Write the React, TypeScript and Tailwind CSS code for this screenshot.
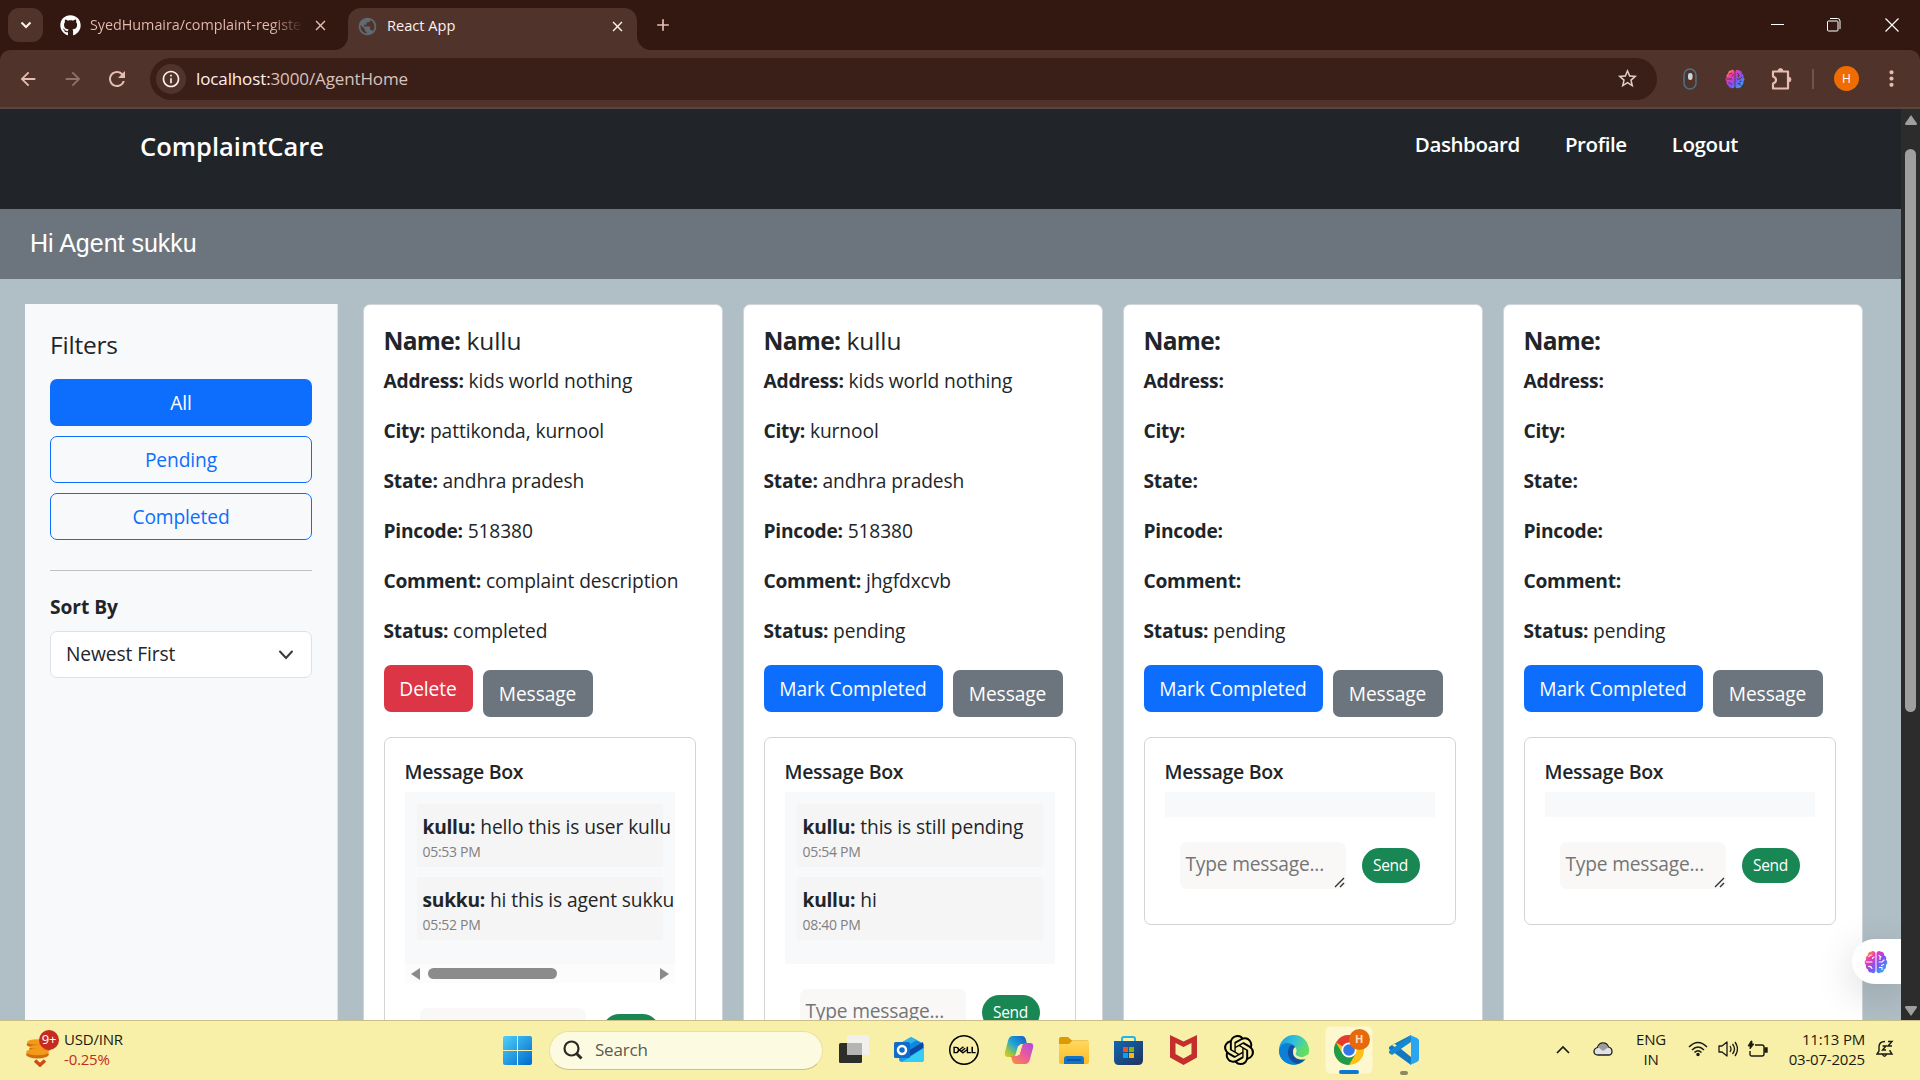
import React from "react";
import { FaGithub } from "react-icons/fa";
import { SiDell, SiOpenai } from "react-icons/si";
import { MdArrowBack, MdArrowForward, MdRefresh, MdInfoOutline, MdStarOutline, MdClose, MdAdd, MdMoreVert, MdPublic } from "react-icons/md";

type Msg = { from: string; text: string; time: string };
type Complaint = {
  name: string; address: string; city: string; state: string; pincode: string;
  comment: string; status: string; messages: Msg[]; scroll?: boolean;
};

const empty: Complaint = { name: "", address: "", city: "", state: "", pincode: "", comment: "", status: "pending", messages: [] };

const complaints: Complaint[] = [
  {
    name: "kullu", address: "kids world nothing", city: "pattikonda, kurnool", state: "andhra pradesh", pincode: "518380",
    comment: "complaint description", status: "completed", scroll: true,
    messages: [
      { from: "kullu", text: "hello this is user kullu", time: "05:53 PM" },
      { from: "sukku", text: "hi this is agent sukku", time: "05:52 PM" },
    ],
  },
  {
    name: "kullu", address: "kids world nothing", city: "kurnool", state: "andhra pradesh", pincode: "518380",
    comment: "jhgfdxcvb", status: "pending",
    messages: [
      { from: "kullu", text: "this is still pending", time: "05:54 PM" },
      { from: "kullu", text: "hi", time: "08:40 PM" },
    ],
  },
  empty,
  empty,
];

function BrainIcon({ className, line }: { className: string; line: string }) {
  return (
    <svg className={className} viewBox="0 0 24 24">
      <path d="M11.500 3.500C11.500 1 8.500.3 7 1.800 4.800 1.800 3.500 3.600 3.800 5.400 1.800 6.300 1.300 8.400 2 9.800.2 11 .2 13.700 2 15 1.500 17.200 2.500 19 4 19.600 4 22 6 23 7.600 22.400 9 24 11.500 23 11.500 20.800Z" fill="url(#brain)" />
      <path d="M12.500 3.500C12.500 1 15.500.3 17 1.800 19.200 1.800 20.500 3.600 20.200 5.400 22.200 6.300 22.700 8.400 22 9.800 23.800 11 23.800 13.700 22 15 22.500 17.200 21.500 19 20 19.600 20 22 18 23 16.400 22.400 15 24 12.500 23 12.500 20.800Z" fill="url(#brain)" />
      <path d="M5 6.500Q6 4.800 8 5M2 12h6M8.500 8.500Q8.500 7.500 10 7M4.500 16.500Q7 16 8 18.500M15 5.500l2 1.500M16 7.500v2M15 12h3l2-2M15.500 17.500h2.500v2M19.500 14.500l-2 1" fill="none" stroke={line} strokeWidth="1.100" strokeLinecap="round" />
    </svg>
  );
}

function TabStrip() {
  return (
    <div className="flex h-[50px] shrink-0 bg-[#331812] pl-2 text-[14.4px] tracking-[-0.1px] text-[#e7bdb1]">
      <div className="mt-2 flex h-[34px] w-[35px] items-center justify-center rounded-[11px] bg-[#50342c] text-[#fff0ec]">
        <svg width="12" height="8" viewBox="0 0 12 8" fill="none" stroke="currentColor" strokeWidth="2"><path d="M1.500 1.500 6 6l4.500-4.500" /></svg>
      </div>
      <div className="flex w-[305px] items-center pl-[17px]">
        <FaGithub className="size-[21px] text-white" />
        <span className="ml-[9px] w-[213px] bg-gradient-to-r from-[#e7bdb1] from-85% to-transparent bg-clip-text tracking-[-0.05px] whitespace-nowrap text-transparent">SyedHumaira/complaint-registe</span>
        <MdClose className="ml-[9px] size-[17px]" />
      </div>
      <div className="relative mt-2 flex h-[42px] w-[289px] items-center rounded-t-[13px] bg-[#50342c] pb-1.5 pl-[9px] text-[#fff0ec]">
        <svg className="absolute bottom-0 -left-3.5" width="14" height="14"><path d="M14 0V14H0A14 14 0 0 0 14 0Z" fill="#50342c" /></svg>
        <svg className="absolute -right-3.5 bottom-0" width="14" height="14"><path d="M0 0V14H14A14 14 0 0 1 0 0Z" fill="#50342c" /></svg>
        <MdPublic className="size-[21px] text-[#5f6b72]" />
        <span className="ml-[9px] text-[14.600px] tracking-normal">React App</span>
        <MdClose className="mr-[11px] ml-auto size-[17px]" />
      </div>
      <MdAdd className="mt-[15px] ml-[16px] size-[20px]" />
      <div className="ml-auto flex h-[50px] items-center text-white">
        <svg className="mr-[43px]" width="13" height="14"><path d="M0 6.500H13" stroke="white" /></svg>
        <svg className="mr-[44px]" width="14" height="14" fill="none" stroke="white"><rect x=".5" y="3" width="10.500" height="10" rx="1" /><path d="M3 .5h7.500a2.500 2.500 0 0 1 2.500 2.500V11" /></svg>
        <svg className="mr-[21px]" width="14" height="14" stroke="white" strokeWidth="1.200"><path d="M.5.5l13 13M13.500.5l-13 13" /></svg>
      </div>
    </div>
  );
}

function Toolbar() {
  return (
    <div className="bg-[#331812]">
      <div className="flex h-[59px] items-center rounded-t-[10px] border-b-2 border-[#5b4540] bg-[#50342c] pl-[17px] text-[#e7bdb1]">
        <MdArrowBack className="size-[22px]" />
        <MdArrowForward className="ml-[23px] size-[22px] text-[#917168]" />
        <MdRefresh className="ml-[21px] size-[24px]" />
        <div className="ml-[21px] flex h-[42px] w-[1507px] items-center rounded-full bg-[#3a1f19] pl-[6px]">
          <div className="flex size-[30px] items-center justify-center rounded-full bg-[#50342c] text-[#fff0ec]"><MdInfoOutline className="size-5" /></div>
          <span className="mt-px ml-[10px] text-[17px] tracking-[-0.12px] text-[#d9c2bb]"><span className="text-[#fff0ec]">localhost:</span>3000/AgentHome</span>
          <MdStarOutline className="mr-[18px] ml-auto size-[23px] text-[#dfcdc6]" />
        </div>
        <svg className="ml-[26px]" width="14" height="22" fill="none"><rect x="1" y="1" width="12" height="20" rx="6" stroke="#4f7082" strokeWidth="1.500" /><rect x="5" y="5" width="4.500" height="7" rx="2.200" fill="#c6d6df" /></svg>
        <BrainIcon className="ml-[28px] size-[20px]" line="#50342c" />
        <svg className="ml-[25px]" width="23" height="24" viewBox="0 0 23 24" fill="none" stroke="currentColor" strokeWidth="2.200" strokeLinejoin="round"><path d="M3 4.500h15v17H3v-5q3-1 3-3.500t-3-3.500Z" /><path d="M8 4a2.500 2.500 0 0 1 5 0ZM18.500 10a2.500 2.500 0 0 1 0 5Z" fill="currentColor" strokeWidth=".8" /></svg>
        <div className="ml-[19px] h-5 w-[2px] bg-[#72534b]" />
        <div className="ml-[20px] flex size-[25px] items-center justify-center rounded-full bg-[#ef6c00] text-[12px] text-white">H</div>
        <MdMoreVert className="ml-[20px] size-[25px]" />
      </div>
    </div>
  );
}

function Sidebar() {
  return (
    <aside className="h-[760px] w-[313px] shrink-0 border-r border-[#dee2e6] bg-[#f8f9fa] px-[25px] pt-[26px]">
      <h4 className="text-[24.500px] leading-[30px] font-medium tracking-[-0.2px]">Filters</h4>
      <div className="mt-[19px] flex flex-col gap-[10px]">
        <button className="h-[47px] rounded-[7px] bg-[#0d6efd] pt-px text-white">All</button>
        <button className="h-[47px] rounded-[7px] border border-[#0d6efd] pt-px text-[#0d6efd]">Pending</button>
        <button className="h-[47px] rounded-[7px] border border-[#0d6efd] pt-px text-[#0d6efd]">Completed</button>
      </div>
      <div className="mt-[30px] h-px bg-[#c0c2c4]" />
      <div className="mt-[21px] leading-[30px] font-bold tracking-[-0.05px]">Sort By</div>
      <div className="mt-[9px] flex h-[47px] items-center justify-between rounded-[7px] border border-[#dee2e6] bg-white pr-[17px] pl-[15px]">
        Newest First
        <svg width="16" height="12" viewBox="0 0 16 12" fill="none" stroke="#343a40" strokeWidth="2" strokeLinecap="round"><path d="M2 2.500 8 9l6-6.500" /></svg>
      </div>
    </aside>
  );
}

function Field({ label, value }: { label: string; value: string }) {
  return (
    <p className="mb-5 h-[30px] leading-[30px] whitespace-nowrap"><b className="tracking-[-0.25px]">{label}:</b> {value}</p>
  );
}

function MessageBox({ c }: { c: Complaint }) {
  return (
    <div className="mt-5 flex w-[312px] flex-col rounded-[7px] border border-[#d3d3d4] px-5 pt-[21px] pb-[35px]">
      <h6 className="mb-[8px] h-[25px] text-[19.500px] leading-[25px] font-semibold tracking-[-0.3px]">Message Box</h6>
      <div className="w-[270px] overflow-hidden bg-[#f8f9fa]">
        <div className={c.messages.length ? "px-3 pt-3 pb-[24px]" : "h-[25px]"}>
          <div className="flex flex-col gap-[10px]">
            {c.messages.map((m) => (
              <div key={m.time} className="h-[63px] bg-[#f5f5f5] px-[6px] pt-[8px] whitespace-nowrap">
                <div className="h-[30px] leading-[30px]"><b className="tracking-[-0.25px]">{m.from}:</b> {m.text}</div>
                <div className="text-[14px] leading-[20px] tracking-[-0.3px] text-[#808080]">{m.time}</div>
              </div>
            ))}
          </div>
        </div>
      </div>
      {c.scroll && (
        <div className="flex h-[19px] w-[270px] items-center bg-[#fcfcfc] px-[6px]">
          <svg width="9" height="12"><path d="M9 0V12L0 6Z" fill="#8b8b8b" /></svg>
          <div className="ml-2 h-[11px] w-[129px] rounded-full bg-[#8b8b8b]" />
          <svg className="ml-auto" width="9" height="12"><path d="M0 0V12L9 6Z" fill="#8b8b8b" /></svg>
        </div>
      )}
      <div className="mt-[25px] flex items-start pl-[15px]">
        <div className="relative h-[47px] w-[166px] rounded-[7px] bg-[#f9f8f7] pt-[7px] pl-[6px] leading-[30px] tracking-[-0.2px] text-[#757575]">
          Type message...
          <svg className="absolute right-px bottom-px" width="11" height="11" stroke="#333" strokeWidth="1.400"><path d="M1 10 10 1M6 10l4-4" /></svg>
        </div>
        <button className="mt-[6px] ml-4 h-[35px] w-[58px] rounded-full bg-[#198754] text-[15.500px] tracking-[-0.3px] text-white">Send</button>
      </div>
    </div>
  );
}

function Card({ c }: { c: Complaint }) {
  return (
    <article className="h-[760px] w-[360px] shrink-0 rounded-t-[7px] border border-[#ced4d7] bg-white pt-[21px] pr-5 pl-[19.500px]">
      <h5 className="mb-[10px] h-[30px] text-[24.500px] leading-[30px] font-medium tracking-[-0.1px] whitespace-nowrap"><b className="tracking-[-0.7px]">Name:</b> {c.name}</h5>
      <Field label="Address" value={c.address} />
      <Field label="City" value={c.city} />
      <Field label="State" value={c.state} />
      <Field label="Pincode" value={c.pincode} />
      <Field label="Comment" value={c.comment} />
      <Field label="Status" value={c.status} />
      <div className="-mt-[1px] flex items-start gap-[10px] text-white">
        {c.status === "completed" ? (
          <button className="h-[47px] w-[89px] rounded-[7px] bg-[#dc3545] pt-px">Delete</button>
        ) : (
          <button className="h-[47px] w-[179px] rounded-[7px] bg-[#0d6efd] pt-px">Mark Completed</button>
        )}
        <button className="mt-[5px] h-[47px] w-[110px] rounded-[7px] bg-[#6c757d] pt-px">Message</button>
      </div>
      <MessageBox c={c} />
    </article>
  );
}

function Page() {
  return (
    <div className="relative flex h-[911px] overflow-hidden bg-[#b0bec5] text-[#212529]">
      <div className="flex w-[1901px] flex-col">
        <nav className="flex h-[100px] shrink-0 items-start bg-[#212529] pl-[140px] text-white">
          <span className="mt-[20px] text-[25.500px] leading-[34px] font-semibold tracking-[0px]">ComplaintCare</span>
          <div className="mt-[19px] mr-[163px] ml-auto flex gap-[45px] text-[20.500px] leading-[32px] font-semibold tracking-[-0.4px]">
            <span>Dashboard</span>
            <span>Profile</span>
            <span>Logout</span>
          </div>
        </nav>
        <div className="flex h-[70px] shrink-0 items-center bg-[#6c757d] pl-[30px] font-['Liberation_Sans'] text-[25px] text-white">Hi Agent sukku</div>
        <div className="flex pt-[25px] pl-[25px] text-[19.200px] tracking-[-0.1px]">
          <Sidebar />
          <div className="ml-[25px] flex gap-[20px]">
            {complaints.map((c, i) => <Card key={i} c={c} />)}
          </div>
        </div>
      </div>
      <div className="flex w-[19px] flex-col items-center bg-[#2c2c2c] pt-[6px] pb-1">
        <svg width="12" height="10"><path d="M6 0 12 8.500Q12 10 11 10H1Q0 10 0 8.500Z" fill="#9f9f9f" /></svg>
        <div className="mt-[24px] h-[563px] w-[11px] rounded-full bg-[#9f9f9f]" />
        <svg className="mt-auto" width="12" height="10"><path d="M6 10 12 1.500Q12 0 11 0H1Q0 0 0 1.500Z" fill="#9f9f9f" /></svg>
      </div>
      <div className="absolute top-[830px] right-[19px] flex h-[45px] w-[49px] items-center rounded-l-full bg-white pl-[12px] shadow-[0_10px_40px_rgba(0,0,0,0.16)] [clip-path:inset(-60px_0_-60px_-60px)]">
        <BrainIcon className="size-[24px]" line="#ffffff" />
      </div>
    </div>
  );
}

function Cell({ children, active }: { children: React.ReactNode; active?: boolean }) {
  return (
    <div className="flex w-[55px] justify-center">
      <div className={active ? "relative flex size-[48px] items-center justify-center rounded-[5px] border border-[#fbf3b8] bg-[#fdf8d0]" : "relative flex size-[48px] items-center justify-center"}>{children}</div>
    </div>
  );
}

function Taskbar() {
  return (
    <footer className="flex h-[60px] items-center border-t border-[#c9bf87] bg-[#f8f0a8] pb-px text-[15px] tracking-[-0.2px] text-[#1b1a12]">
      <div className="flex w-[490px] items-center pb-[2px] pl-[26px]">
        <div className="relative h-[36px] w-[38px]">
          <svg width="34" height="36" viewBox="0 0 34 36">
            <g fill="#cf6f0c"><ellipse cx="12" cy="13.500" rx="11.500" ry="3.500" /><ellipse cx="14" cy="18" rx="11" ry="3" /><ellipse cx="11.500" cy="23.500" rx="11.500" ry="4" /></g>
            <g fill="#f39a1b"><ellipse cx="12" cy="11" rx="11" ry="2.800" /><ellipse cx="14" cy="16" rx="10.500" ry="2.200" /><ellipse cx="11.500" cy="21" rx="11.500" ry="3.200" /></g>
            <path d="m9 29.500 5 4.500 5-4.500" fill="none" stroke="#d14a15" strokeWidth="3.500" />
          </svg>
          <span className="absolute -top-[1px] left-[13px] flex size-5 items-center justify-center rounded-full bg-[#c62b20] text-[13px] text-white">9+</span>
        </div>
        <div className="leading-[20px]"><div>USD/INR</div><div className="text-[#c42b1c]">-0.25%</div></div>
      </div>
      <div className="flex w-[59px] justify-start pl-[13px]">
        <svg width="29" height="29"><g fill="url(#win)"><path d="M2 0H14V14H0V2Q0 0 2 0ZM15 0H27Q29 0 29 2V14H15ZM0 15H14V29H2Q0 29 0 27ZM15 15H29V27Q29 29 27 29H15Z" /></g></svg>
      </div>
      <div className="flex h-[39px] w-[274px] items-center rounded-full border border-[#ece19b] border-b-[#cbc184] bg-[#fdfae2] pl-[13px] text-[17px] text-[#5c5a4c]">
        <svg width="20" height="20" viewBox="0 0 20 20" fill="none" stroke="#2b2a25" strokeWidth="2.200"><circle cx="8.500" cy="8.500" r="7" /><path d="m13.500 13.500 5 5" strokeWidth="3" /></svg>
        <span className="ml-[12px]">Search</span>
      </div>
      <div className="ml-[3px] flex">
        <Cell>
          <svg width="30" height="30"><rect y="8" width="23" height="20" rx="1.500" fill="#2d2d2b" /><rect x="8" width="22" height="20" rx="1.500" fill="#f1f0ec" /><path d="M8 8H23V20H9.500Q8 20 8 18.500Z" fill="#b5b5b5" /></svg>
        </Cell>
        <Cell>
          <svg width="30" height="30" viewBox="0 0 30 30"><path d="M5 9 17 2l13 7v15q0 3-3 3H8q-3 0-3-3Z" fill="#1a9de8" /><path d="M10 8 18 3l11 6-13 10Z" fill="#1286dd" /><path d="M7 8 17 2l6 3-12 7Z" fill="#2fb3ee" /><path d="m14 16 15-9v6L16 21Z" fill="#0a4aa6" /><path d="m8 27 22-14v11q0 3-3 3Z" fill="#35cdf5" /><rect y="7" width="16" height="16" rx="1.500" fill="#0f6cc9" /><circle cx="8" cy="15" r="4" fill="none" stroke="white" strokeWidth="2.500" /></svg>
        </Cell>
        <Cell><SiDell className="size-[30px] text-black" /></Cell>
        <Cell>
          <svg width="30" height="28" viewBox="0 0 30 28"><path d="M9 0h9q3 0 4 4l1 4h-5q-3 0-4 4l-2 6q-1 3-4 3H4q-4 0-3-5L4 5q1-5 5-5Z" fill="url(#copA)" /><path d="M21 28h-9q-3 0-4-4l-1-4h5q3 0 4-4l2-6q1-3 4-3h4q4 0 3 5l-3 11q-1 5-5 5Z" fill="url(#copB)" /><path d="m14 10h4l-2.500 9h-4Z" fill="#f8f0a8" /></svg>
        </Cell>
        <Cell>
          <svg width="30" height="27"><path d="M0 2Q0 0 2 0H9L13 3.500H28Q30 3.500 30 5V12H0Z" fill="#dd9a05" /><path d="M0 7H10L13 4H30V25Q30 27 28 27H2Q0 27 0 25Z" fill="url(#fold)" /><path d="M5 27V22Q5 19 8 19H22Q25 19 25 22V27Z" fill="#1273c9" /><path d="M8 23H22" stroke="#0a4d94" strokeWidth="1.500" /></svg>
        </Cell>
        <Cell>
          <svg width="29" height="29"><path d="M8 6V3Q8 1 10 1H19Q21 1 21 3V6" fill="none" stroke="#20b5ec" strokeWidth="2" /><path d="M0 5H29V24Q29 29 24 29H5Q0 29 0 24Z" fill="url(#store)" /><path d="M9 11h5v5H9Z" fill="#f25022" /><path d="M15 11h5v5h-5Z" fill="#7fba00" /><path d="M9 17h5v5H9Z" fill="#00a4ef" /><path d="M15 17h5v5h-5Z" fill="#ffb900" /></svg>
        </Cell>
        <Cell>
          <svg width="27" height="30"><path d="M0 0 13.500 6.500 27 0V22.500L13.500 30 0 22.500ZM5.500 8V19L13.500 23.500 21.500 19V8L13.500 12Z" fill="#c22f2c" fillRule="evenodd" /></svg>
        </Cell>
        <Cell><SiOpenai className="size-[30px] text-black" /></Cell>
        <Cell>
          <svg width="30" height="30" viewBox="0 0 30 30"><circle cx="15" cy="15" r="15" fill="url(#edgeA)" /><path d="M0 16C1 8 8 7 12 9c4 1 6 5 4 8-3 5 3 8 11 6-4 6-11 8-17 6C4 27 0 22 0 16Z" fill="#0c7fd6" /><path d="M11 11c-5 7-1 15 7 18 4-1 7-3 9-6-7 2-14 0-13-6 0-2 1-4 2-5-2-2-4-2-5-1Z" fill="#124f9e" /><path d="M30 13c1 6-3 8-7 8-3 0-6-1-5-3 2-2 1-5-2-7 3 1 9 0 14 2Z" fill="#63dc63" opacity=".6" /><path d="M16 12c2 2 2 4 1 6s2 4 7 4l6-3c-1 2-1 3-3 5-7 2-13-1-13-7 0-3 1-4 2-5Z" fill="#f8f0a8" /></svg>
        </Cell>
        <Cell active>
          <svg width="30" height="30" viewBox="0 0 30 30"><circle cx="15" cy="15" r="15" fill="#fbc116" /><path d="M15 15 2 7.500A15 15 0 0 1 28 7.500H15Z" fill="#e33b2e" /><path d="M2 7.500A15 15 0 0 0 15 30l6.500-11.300L15 15 8.500 18.800Z" fill="#219a4b" /><circle cx="15" cy="15" r="7.500" fill="white" /><circle cx="15" cy="15" r="5.800" fill="#3277e8" /></svg>
          <span className="absolute top-[2px] right-[2px] flex size-[21px] items-center justify-center rounded-full bg-[#e8690b] text-[11px] font-bold text-[#fbdcc3]">H</span>
          <span className="absolute bottom-[-1px] h-1 w-5 rounded-full bg-[#0b78d4]" />
        </Cell>
        <Cell>
          <svg width="30" height="30" viewBox="0 0 30 30"><path d="M22 0 8 14 3 10 0 12v2l22 16v-8L6 9l-3 1Z" fill="#1478c0" /><path d="m0 18 3 2L22 7V0L0 16Z" fill="#1688d2" /><path d="m21 0 7 3q2 1 2 3v18q0 2-2 3l-7 3 1-3V3Z" fill="#2aa5f2" /></svg>
          <span className="absolute bottom-[-1px] h-1 w-2 rounded-full bg-[#8e885f]" />
        </Cell>
      </div>
      <div className="ml-auto flex items-center pb-[2px]">
        <svg width="14" height="9" fill="none" stroke="#1b1a12" strokeWidth="1.700"><path d="m1 8 6-6 6 6" /></svg>
        <svg className="ml-[23px]" width="20" height="14"><path d="M5 13Q1 13 1 9.500 1 6.500 4.500 5.500 6 1 10 1q4 0 5.500 4Q19 6 19 9.500 19 13 15.500 13Z" fill="#e2e2e5" stroke="#1f1f1f" strokeWidth="1.300" /><path d="M5 5Q7 1.600 10 1.600q4 0 5 4L10 9Z" fill="#9b9b9d" /></svg>
        <div className="ml-[23px] w-[30px] text-center leading-[20px]">ENG<br />IN</div>
        <svg className="ml-[22px]" width="20" height="16" viewBox="0 0 20 16" fill="none" stroke="#1b1a12" strokeWidth="1.500"><path d="M1 6Q10-3 19 6M4 9q6-6 12 0M6.500 11.500q3.500-3.500 7 0" /><circle cx="10" cy="13.500" r="1" fill="#1b1a12" /></svg>
        <svg className="ml-[10px]" width="20" height="18" viewBox="0 0 20 18" fill="none" stroke="#1b1a12" strokeWidth="1.300" strokeLinejoin="round"><path d="M1 6H4L9 2V16L4 12H1Z" /><path d="M12 6q2 3 0 6M14.500 4q4 5 0 10M17 2q5 7 0 14" /></svg>
        <svg className="ml-[9px]" width="21" height="18" viewBox="0 0 21 18" fill="none" stroke="#1b1a12" strokeWidth="1.400"><path d="M8 5h7q2 0 2 2v7q0 2-2 2H5q-2 0-2-2v-3" /><path d="M18 8h2v4h-2Z" fill="#1b1a12" /><path d="M4 1 1 6h2v3l4-5H5V1Z" fill="#1b1a12" strokeWidth=".8" /></svg>
        <div className="flex w-[97px] flex-col items-end leading-[20px] whitespace-nowrap"><span>11:13 PM</span><span>03-07-2025</span></div>
        <svg className="mr-[26px] ml-[11px]" width="18" height="18" viewBox="0 0 18 18" fill="none" stroke="#1b1a12" strokeWidth="1.400"><path d="M9 1.500Q3 1.500 3 7v4l-2 3h15l-2-3v-1M6.500 14.500q2 3.500 4 0" /><path d="M6.500 6h3.500l-3.500 4h3.500M12 1.500h4l-4 4.500h4" /></svg>
      </div>
    </footer>
  );
}

export default function App() {
  return (
    <div className="flex h-[1080px] w-[1920px] flex-col overflow-hidden font-['Open_Sans','Noto_Sans',sans-serif]">
      <svg width="0" height="0" className="absolute">
        <defs>
          <linearGradient id="brain" gradientUnits="userSpaceOnUse" x1="3" y1="2" x2="21" y2="22"><stop offset="0" stopColor="#ffa12c" /><stop offset=".25" stopColor="#ef37b4" /><stop offset=".6" stopColor="#7c53f2" /><stop offset="1" stopColor="#28b4fa" /></linearGradient>
          <linearGradient id="win" x1="0" y1="0" x2="1" y2="1"><stop offset="0" stopColor="#4fd0fb" /><stop offset="1" stopColor="#0069cc" /></linearGradient>
          <linearGradient id="copA" x1="1" y1="0" x2="0" y2="1"><stop offset="0" stopColor="#1556c4" /><stop offset=".5" stopColor="#1fa5d9" /><stop offset=".8" stopColor="#a5c83c" /><stop offset="1" stopColor="#f4c514" /></linearGradient>
          <linearGradient id="copB" x1="1" y1="0" x2="0" y2="1"><stop offset="0" stopColor="#a44bea" /><stop offset=".5" stopColor="#ee5b98" /><stop offset="1" stopColor="#f8923c" /></linearGradient>
          <linearGradient id="fold" x1="0" y1="0" x2="0" y2="1"><stop offset="0" stopColor="#ffd75e" /><stop offset="1" stopColor="#fdbb24" /></linearGradient>
          <linearGradient id="store" x1="0" y1="0" x2="1" y2="1"><stop offset="0" stopColor="#1167b5" /><stop offset="1" stopColor="#22325b" /></linearGradient>
          <linearGradient id="edgeA" x1="0" y1="0" x2="1" y2=".4"><stop offset="0" stopColor="#1597dc" /><stop offset=".5" stopColor="#31c0dc" /><stop offset="1" stopColor="#66e05e" /></linearGradient>
        </defs>
      </svg>
      <TabStrip />
      <Toolbar />
      <Page />
      <Taskbar />
    </div>
  );
}
